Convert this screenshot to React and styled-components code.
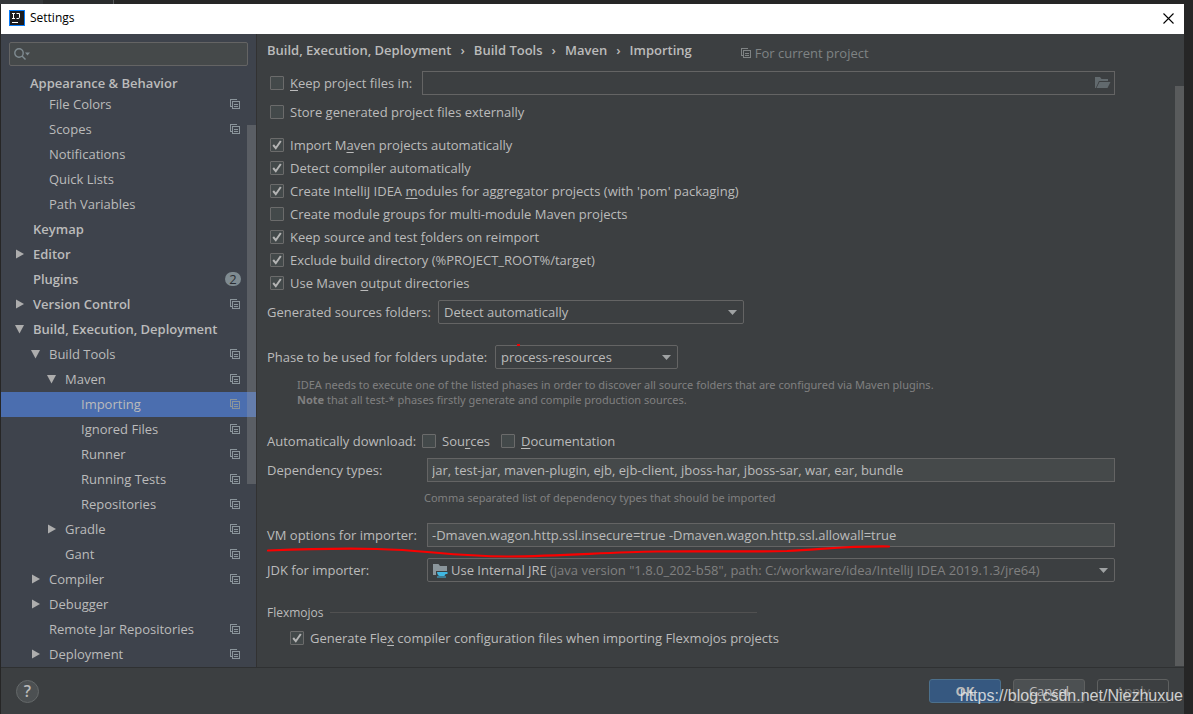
import React from "react";
import styled, { createGlobalStyle } from "styled-components";

const Global = createGlobalStyle`
  *, *::before, *::after { box-sizing: border-box; }
  body { margin: 0; background: #2b2b2b; }
  body, button, input, select { font-family: "Open Sans", "Noto Sans CJK SC", sans-serif; font-size: 13px; line-height: 18px; color: #bbbbbb; }
  u { text-underline-offset: 2px; }
`;

const Desktop = styled.div`
  height: 100vh;
  display: flex;
  flex-direction: column;
  background: #262626;
  overflow: hidden;
`;
const EditorStrip = styled.div`
  flex: none;
  height: 4px;
  background: linear-gradient(90deg, #35383a 0 43px, #2a2c2d 43px 113px, #55585a 113px 114px, #262626 114px);
`;
const Window = styled.div`
  flex: 1;
  min-height: 0;
  margin: 0 9px 0 1px;
  display: flex;
  flex-direction: column;
  background: #3c3f41;
  position: relative;
`;
const TitleBar = styled.header`
  flex: none;
  height: 30px;
  padding: 0 10px 2px 8px;
  display: flex;
  align-items: center;
  gap: 5px;
  background: #ffffff;
  color: #000000;
`;
const Title = styled.h1`
  flex: 1;
  margin: 0;
  font-size: 12px;
  font-weight: 400;
`;
const CloseButton = styled.button`
  border: 0;
  padding: 0;
  background: none;
  display: flex;
`;
const Body = styled.div`
  flex: 1;
  min-height: 0;
  display: flex;
`;

const Sidebar = styled.nav`
  flex: none;
  width: 256px;
  position: relative;
  display: flex;
  flex-direction: column;
  overflow: hidden;
  background: #3e434c;
  border-right: 1px solid #323232;
`;
const SearchBox = styled.label`
  flex: none;
  height: 24px;
  margin: 8px 8px 9px;
  padding: 0 4px;
  display: flex;
  align-items: center;
  background: #45494a;
  border: 1px solid #646464;
  border-radius: 2px;
`;
const SearchInput = styled.input`
  flex: 1;
  min-width: 0;
  border: 0;
  outline: 0;
  padding: 0;
  background: none;
`;
const StickyGroup = styled.div`
  flex: none;
  height: 17px;
  line-height: 17px;
  padding-left: 29px;
  font-weight: 600;
`;
const Tree = styled.ul`
  margin: 0;
  padding: 0;
  list-style: none;
`;
const TreeRow = styled.li`
  height: 25px;
  padding: 0 16px 2px ${(p) => 12 + p.$level * 16}px;
  display: flex;
  align-items: center;
  font-weight: ${(p) => (p.$bold ? 600 : 400)};
  background: ${(p) => (p.$selected ? "#4b6eaf" : "transparent")};
`;
const ArrowSlot = styled.span`
  width: 20px;
  padding-left: 2px;
  display: flex;
`;
const TreeLabel = styled.span`
  flex: 1;
  white-space: nowrap;
`;
const Badge = styled.span`
  width: 16px;
  height: 14px;
  line-height: 14px;
  margin-right: -1px;
  border-radius: 7px;
  text-align: center;
  font-weight: 400;
  background: #7f8b91;
  color: #2b2e33;
`;
const Thumb = styled.div`
  position: absolute;
  right: 0;
  width: 9px;
  top: ${(p) => p.$top}px;
  ${(p) => (p.$height ? `height: ${p.$height}px;` : "bottom: 1px;")}
  background: rgba(166, 166, 166, 0.28);
`;

const Main = styled.main`
  flex: 1;
  min-width: 0;
  position: relative;
  padding: 0 69px 0 10px;
  overflow: hidden;
`;
const Header = styled.div`
  height: 37px;
  padding-bottom: 5px;
  display: flex;
  align-items: center;
  gap: 49px;
`;
const Crumbs = styled.div`
  display: flex;
  gap: 9px;
  font-weight: 600;
  white-space: nowrap;
`;
const Scope = styled.div`
  display: flex;
  align-items: center;
  gap: 4px;
  padding-top: 6px;
  color: #7f8384;
  white-space: nowrap;
`;
const Row = styled.div`
  display: flex;
  align-items: center;
  height: 24px;
  margin-top: ${(p) => p.$top || 0}px;
  padding-left: ${(p) => p.$indent || 0}px;
  position: relative;
  white-space: nowrap;
`;
const CheckRow = styled(Row)`
  height: 23px;
`;
const OptionList = styled.div`
  margin-top: 10px;
`;
const CheckLabel = styled.label`
  display: flex;
  align-items: center;
  gap: 6px;
  min-width: ${(p) => p.$width || 0}px;
`;
const Check = styled.input`
  appearance: none;
  flex: none;
  width: 14px;
  height: 14px;
  margin: 0;
  border: 1px solid #6b6b6b;
  border-radius: 1px;
  background: #43494a center / 12px 12px no-repeat;
  &:checked {
    background-image: url("data:image/svg+xml,%3Csvg xmlns='http://www.w3.org/2000/svg' viewBox='0 0 12 12'%3E%3Cpath d='M2.200 6L4.800 9.200L9.800 2' fill='none' stroke='%23b4b4b4' stroke-width='2'/%3E%3C/svg%3E");
  }
`;
const FieldLabel = styled.label`
  flex: none;
  width: ${(p) => p.$width}px;
`;
const GroupLabel = styled.span`
  flex: none;
  width: 155px;
`;
const Field = styled.input`
  flex: 1;
  min-width: 0;
  height: 24px;
  padding: 0 4px;
  outline: 0;
  border: 1px solid #646464;
  background: #45494a;
`;
const PathField = styled.div`
  flex: 1;
  height: 24px;
  display: flex;
  align-items: center;
  padding-right: 3px;
  border: 1px solid #646464;
`;
const PathInput = styled(Field)`
  height: 22px;
  border: 0;
  background: none;
`;
const Combo = styled.div`
  height: 24px;
  ${(p) => (p.$width ? `flex: none; width: ${p.$width}px;` : "flex: 1; min-width: 0;")}
  display: flex;
  align-items: center;
  gap: 4px;
  padding: 0 6px 0 5px;
  border: 1px solid #646464;
  border-radius: 2px;
`;
const JdkCombo = styled(Combo)`
  gap: 3px;
  padding-left: 4px;
`;
const Select = styled.select`
  appearance: none;
  flex: ${(p) => (p.$fit ? "none" : "1")};
  height: 22px;
  padding: 0;
  border: 0;
  outline: 0;
  background: transparent;
`;
const ComboDetail = styled.span`
  flex: 1;
  color: #808080;
`;
const Hint = styled.p`
  margin: 8px 0 0 ${(p) => p.$indent}px;
  font-family: "Noto Sans", sans-serif;
  font-size: 11px;
  line-height: 15px;
  color: #808080;
  white-space: nowrap;
`;
const GroupTitle = styled(Row)`
  height: 23px;
  width: 490px;
  gap: 6px;
  font-size: 12px;
  &::after {
    content: "";
    flex: 1;
    height: 1px;
    background: #515151;
  }
`;
const RedStroke = styled.svg`
  position: absolute;
  left: 0;
  top: 20px;
  pointer-events: none;
`;
const RedDot = styled.span`
  position: absolute;
  left: 250px;
  top: -1px;
  width: 3px;
  height: 2px;
  background: #f00000;
`;

const Footer = styled.footer`
  flex: none;
  height: 47px;
  padding: 0 15px;
  display: flex;
  align-items: center;
  gap: 12px;
  border-top: 1px solid #2f3132;
`;
const HelpButton = styled.button`
  width: 23px;
  height: 23px;
  padding: 0;
  margin-right: auto;
  border: 1px solid #646869;
  border-radius: 50%;
  background: #4c5052;
  font-size: 16px;
  font-weight: 600;
  line-height: 20px;
`;
const Button = styled.button`
  width: 72px;
  height: 24px;
  padding: 0;
  border-radius: 3px;
  border: 1px solid ${(p) => (p.$primary ? "#4c708c" : "#5e6060")};
  background: ${(p) => (p.$primary ? "#365880" : p.disabled ? "#3c3f41" : "#4c5052")};
  color: ${(p) => (p.disabled ? "#777777" : "#bbbbbb")};
  font-weight: ${(p) => (p.$primary ? 700 : 400)};
`;
const Watermark = styled.div`
  position: absolute;
  right: 1px;
  bottom: 8px;
  font: 16px/20px "Liberation Sans", sans-serif;
  color: rgba(235, 235, 235, 0.85);
  pointer-events: none;
`;

const CopyIcon = ({ color = "#8b959b" }) => (
  <svg width="10" height="10" viewBox="0 0 10 10" fill="none" stroke={color} shapeRendering="crispEdges" aria-hidden="true">
    <path d="M7 .5H.5V7.5H2" />
    <path d="M2.5 2.5H9.5V9.5H2.5Z" />
    <path d="M4 5.5H8M4 7.5H8" />
  </svg>
);
const TreeArrow = ({ open }) => (
  <svg width="10" height="10" viewBox="0 0 10 10" fill="#adadad" aria-hidden="true">
    <path d={open ? "M0 1H9L4.500 9.5Z" : "M1 .5L9 5L1 9.5Z"} />
  </svg>
);
const ComboArrow = () => (
  <svg width="9" height="5" viewBox="0 0 9 5" fill="#9fa2a3" aria-hidden="true">
    <path d="M0 0H9L4.500 5Z" />
  </svg>
);
const LogoIcon = () => (
  <svg width="16" height="16" viewBox="0 0 16 16" aria-hidden="true">
    <path fill="#087cfa" d="M0 0H16V16H0Z" />
    <path fill="#1b1b1f" d="M1 1H15V15H1Z" />
    <path d="M3 3.500H6M4.500 3.500V8.500M3 8.500H6M7.500 3.500H10.500V7.500Q10.500 8.500 9 8.500H7.500M3 12.500H9" stroke="#fff" fill="none" />
  </svg>
);
const SearchIcon = () => (
  <svg width="17" height="14" viewBox="0 0 17 14" fill="none" stroke="#7f8b91" strokeWidth="1.4" aria-hidden="true">
    <circle cx="5" cy="6" r="4.200" />
    <path d="M8 9L11.500 12.500" />
    <path d="M11 5.500H16L13.500 8.500Z" fill="#7f8b91" stroke="none" />
  </svg>
);
const OpenFolderIcon = () => (
  <svg width="16" height="12" viewBox="0 0 16 12" fill="#626a6e" aria-hidden="true">
    <path d="M0 11V0H5L6.500 2H13V4H4L.8 11Z" />
    <path d="M4.500 5H15.500L12.500 11H1.500Z" />
  </svg>
);
const JdkIcon = () => (
  <svg width="16" height="16" viewBox="0 0 16 16" aria-hidden="true">
    <path fill="#8b969c" d="M1 2H6.500L8 4H15V9H4V13H1Z" />
    <path fill="#40b6e0" d="M5 10H15.500V12H13.500Q13 14 12 14H8Q5.500 14 5 10ZM5 14.500H14V15.500H5Z" />
  </svg>
);

const TREE = [
  ["File Colors", 1, { copy: true }],
  ["Scopes", 1, { copy: true }],
  ["Notifications", 1],
  ["Quick Lists", 1],
  ["Path Variables", 1],
  ["Keymap", 0],
  ["Editor", 0, { arrow: "closed" }],
  ["Plugins", 0, { badge: 2 }],
  ["Version Control", 0, { arrow: "closed", copy: true }],
  ["Build, Execution, Deployment", 0, { arrow: "open" }],
  ["Build Tools", 1, { arrow: "open", copy: true }],
  ["Maven", 2, { arrow: "open", copy: true }],
  ["Importing", 3, { selected: true, copy: true }],
  ["Ignored Files", 3, { copy: true }],
  ["Runner", 3, { copy: true }],
  ["Running Tests", 3, { copy: true }],
  ["Repositories", 3, { copy: true }],
  ["Gradle", 2, { arrow: "closed", copy: true }],
  ["Gant", 2, { copy: true }],
  ["Compiler", 1, { arrow: "closed", copy: true }],
  ["Debugger", 1, { arrow: "closed" }],
  ["Remote Jar Repositories", 1, { copy: true }],
  ["Deployment", 1, { arrow: "closed", copy: true }],
];

const OPTIONS = [
  [<>Import M<u>a</u>ven projects automatically</>, true],
  [<>Detect compiler automatically</>, true],
  [<>Create IntelliJ IDEA <u>m</u>odules for aggregator projects (with 'pom' packaging)</>, true],
  [<>Create module <u>g</u>roups for multi-module Maven projects</>, false],
  [<>Keep source and test <u>f</u>olders on reimport</>, true],
  [<>Exclude build directory (%PROJECT_ROOT%/target)</>, true],
  [<>Use Maven <u>o</u>utput directories</>, true],
];

function CheckBox({ checked, width, children }) {
  return (
    <CheckLabel $width={width}>
      <Check type="checkbox" defaultChecked={checked} />
      <span>{children}</span>
    </CheckLabel>
  );
}

export default function App() {
  return (
    <Desktop>
      <Global />
      <EditorStrip />
      <Window>
        <TitleBar>
          <LogoIcon />
          <Title>Settings</Title>
          <CloseButton aria-label="Close">
            <svg width="11" height="11" viewBox="0 0 11 11" stroke="#000" strokeWidth="1.1">
              <path d="M.5 .5L10.500 10.500M10.500 .5L.5 10.500" />
            </svg>
          </CloseButton>
        </TitleBar>
        <Body>
          <Sidebar>
            <SearchBox>
              <SearchIcon />
              <SearchInput type="text" aria-label="Search settings" />
            </SearchBox>
            <StickyGroup>Appearance &amp; Behavior</StickyGroup>
            <Tree>
              {TREE.map(([name, level, o = {}]) => (
                <TreeRow key={name} $level={level} $bold={level === 0} $selected={o.selected}>
                  <ArrowSlot>{o.arrow && <TreeArrow open={o.arrow === "open"} />}</ArrowSlot>
                  <TreeLabel>{name}</TreeLabel>
                  {o.badge && <Badge>{o.badge}</Badge>}
                  {o.copy && <CopyIcon />}
                </TreeRow>
              ))}
            </Tree>
            <Thumb $top={91} $height={359} />
          </Sidebar>
          <Main>
            <Header>
              <Crumbs>
                <span>Build, Execution, Deployment</span>
                <span>›</span>
                <span>Build Tools</span>
                <span>›</span>
                <span>Maven</span>
                <span>›</span>
                <span>Importing</span>
              </Crumbs>
              <Scope>
                <CopyIcon color="#7f8384" />
                For current project
              </Scope>
            </Header>
            <Row $indent={3}>
              <CheckBox width={152}><u>K</u>eep project files in:</CheckBox>
              <PathField>
                <PathInput type="text" aria-label="Project files location" />
                <OpenFolderIcon />
              </PathField>
            </Row>
            <CheckRow $indent={3} $top={5}>
              <CheckBox>Store generated project files externally</CheckBox>
            </CheckRow>
            <OptionList>
              {OPTIONS.map(([text, on], i) => (
                <CheckRow key={i} $indent={3}>
                  <CheckBox checked={on}>{text}</CheckBox>
                </CheckRow>
              ))}
            </OptionList>
            <Row $top={6}>
              <FieldLabel htmlFor="generated" $width={171}>Generated sources folders:</FieldLabel>
              <Combo $width={306}>
                <Select id="generated"><option>Detect automatically</option></Select>
                <ComboArrow />
              </Combo>
            </Row>
            <Row $top={21}>
              <FieldLabel htmlFor="phase" $width={228}>Phase to be used for folders update:</FieldLabel>
              <Combo $width={183}>
                <Select id="phase"><option>process-resources</option></Select>
                <ComboArrow />
              </Combo>
              <RedDot />
            </Row>
            <Hint $indent={30}>
              IDEA needs to execute one of the listed phases in order to discover all source folders that are configured via Maven plugins.
              <br />
              <b>Note</b> that all test-* phases firstly generate and compile production sources.
            </Hint>
            <Row $top={22}>
              <GroupLabel>Automatically download:</GroupLabel>
              <CheckBox width={79}>Sou<u>r</u>ces</CheckBox>
              <CheckBox><u>D</u>ocumentation</CheckBox>
            </Row>
            <Row $top={5}>
              <FieldLabel htmlFor="deps" $width={160}>Dependency types:</FieldLabel>
              <Field id="deps" type="text" defaultValue="jar, test-jar, maven-plugin, ejb, ejb-client, jboss-har, jboss-sar, war, ear, bundle" />
            </Row>
            <Hint $indent={157}>Comma separated list of dependency types that should be imported</Hint>
            <Row $top={18}>
              <FieldLabel htmlFor="vm" $width={160}>VM options for importer:</FieldLabel>
              <Field id="vm" type="text" defaultValue="-Dmaven.wagon.http.ssl.insecure=true -Dmaven.wagon.http.ssl.allowall=true" />
              <RedStroke width="626" height="16" viewBox="0 0 626 16" fill="none" stroke="#fa0000" strokeWidth="2.2" strokeLinecap="round">
                <path d="M1 7.500C40 6 70 5 110 6C160 7 180 13 240 13.500C300 13 340 9 390 8.500C440 8 480 9 520 8C560 6 580 3 622 3.500" />
              </RedStroke>
            </Row>
            <Row $top={11}>
              <FieldLabel htmlFor="jdk" $width={160}>JDK for importer:</FieldLabel>
              <JdkCombo>
                <JdkIcon />
                <Select id="jdk" $fit><option>Use Internal JRE</option></Select>
                <ComboDetail>(java version "1.8.0_202-b58", path: C:/workware/idea/IntelliJ IDEA 2019.1.3/jre64)</ComboDetail>
                <ComboArrow />
              </JdkCombo>
            </Row>
            <GroupTitle $top={19}>Flexmojos</GroupTitle>
            <CheckRow $indent={23} $top={2}>
              <CheckBox checked>Generate Fle<u>x</u> compiler configuration files when importing Flexmojos projects</CheckBox>
            </CheckRow>
            <Thumb $top={52} />
          </Main>
        </Body>
        <Footer>
          <HelpButton aria-label="Help">?</HelpButton>
          <Button $primary>OK</Button>
          <Button>Cancel</Button>
          <Button disabled>Apply</Button>
        </Footer>
        <Watermark>https://blog.csdn.net/Niezhuxue</Watermark>
      </Window>
    </Desktop>
  );
}
